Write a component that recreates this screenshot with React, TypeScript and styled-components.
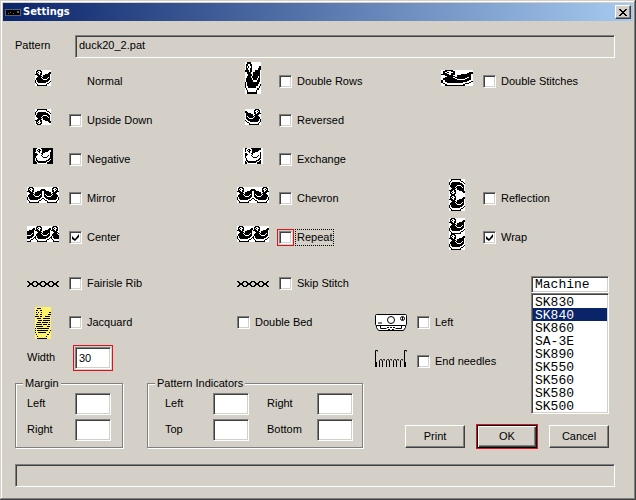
import React, { useState } from "react";
import styled, { createGlobalStyle, css } from "styled-components";

const face = "#d4d0c8";
const shadow = "#808080";
const dark = "#404040";
const marker = "#e0101c";

const GlobalStyle = createGlobalStyle`
  body {
    margin: 0;
    background: ${face};
  }
  * {
    box-sizing: border-box;
  }
  body, button, input {
    font: 11px/13px "Liberation Sans", Arial, sans-serif;
    color: #000;
  }
`;

const sunken = css`
  border: 1px solid;
  border-color: ${shadow} #fff #fff ${shadow};
  box-shadow: inset 1px 1px ${dark}, inset -1px -1px ${face};
`;

const raised = css`
  border: 1px solid;
  border-color: #fff ${dark} ${dark} #fff;
  box-shadow: inset -1px -1px ${shadow};
`;

/* ---------- Pixel art ---------- */

type Bitmap = string[];

const duck: Bitmap = [
  "..####..........",
  ".##..##.........",
  ".#.#..#.......##",
  ".##..##......###",
  "####.##...#####.",
  "..####..#######.",
  "...####.#######.",
  "..####.######.#.",
  ".######.####.##.",
  ".#######....###.",
  "#.############..",
  "#.###########..#",
  "#..########...#.",
  ".#..........##..",
  "..#........#....",
  "..##########....",
];

const stitch: Bitmap = [
  "##....##",
  ".##..##.",
  "..####..",
  "..####..",
  ".##..##.",
  "##....##",
];

const flipX = (b: Bitmap) => b.map((r) => [...r].reverse().join(""));
const flipY = (b: Bitmap) => [...b].reverse();
const beside = (...list: Bitmap[]) =>
  list[0].map((_, i) => list.map((b) => b[i]).join(""));
const doubleRows = (b: Bitmap) => b.flatMap((r) => [r, r]);
const doubleStitches = (b: Bitmap) =>
  b.map((r) => [...r].map((c) => c + c).join(""));
const padX = (b: Bitmap) => b.map((r) => `..${r}..`);
const invert = (b: Bitmap) =>
  b.map((r) => [...r].map((c) => (c === "#" ? "." : "#")).join(""));
const striped = (b: Bitmap) =>
  b.map((r, i) => (i % 2 ? r : ".".repeat(r.length)));
const cut = (b: Bitmap, from: number, to: number) =>
  b.map((r) => r.slice(from, to));

const tracePixels = (b: Bitmap) =>
  b
    .map((row, y) =>
      [...row.matchAll(/#+/g)]
        .map((m) => `M${m.index} ${y}h${m[0].length}v1h-${m[0].length}z`)
        .join("")
    )
    .join("");

function Sprite({ bitmap, paper = "#fff" }: { bitmap: Bitmap; paper?: string }) {
  const w = bitmap[0].length;
  const h = bitmap.length;
  return (
    <svg width={w} height={h} viewBox={`0 0 ${w} ${h}`} shapeRendering="crispEdges" aria-hidden="true">
      <rect width={w} height={h} fill={paper} />
      <path d={tracePixels(bitmap)} />
    </svg>
  );
}

const Carriage = () => (
  <svg width="32" height="17" viewBox="0 0 32 17" fill="none" stroke="#000" aria-hidden="true">
    <path d="M1.5 11.5h29v2l-2 3h-25l-2-3z" fill="#fff" />
    <rect x="0.5" y="0.5" width="31" height="11" rx="1" fill="#fff" />
    <circle cx="16" cy="6" r="3.5" />
    <circle cx="27.5" cy="4.5" r="2" />
    <path d="M27.5 3v3M3 9h4M5.5 12v2.5h6M26.5 12v2.5h-6M12 13.5h2M15 13.5h2M18 13.5h2M13 15.5h2M17 15.5h2" />
  </svg>
);

const Needles = () => (
  <svg width="32" height="25" viewBox="0 0 32 25" fill="none" stroke="#000" aria-hidden="true">
    <path d="M0.5 17V1.5h2v1M29.5 17V1.5h2v1" />
    <path d="M1 13v5M30 13v5" strokeWidth="2" />
    {[4, 7, 11, 14, 18, 21, 25].map((x) => (
      <path key={x} d={`M${x + 0.5} 18V11.5l1-1h1v1`} />
    ))}
  </svg>
);

const art = {
  normal: <Sprite bitmap={duck} />,
  upsideDown: <Sprite bitmap={flipY(duck)} />,
  negative: <Sprite bitmap={invert(padX(duck))} />,
  mirror: <Sprite bitmap={beside(duck, flipX(duck))} />,
  center: <Sprite bitmap={beside(cut(duck, 8, 16), duck, cut(duck, 0, 8))} />,
  doubleRows: <Sprite bitmap={doubleRows(duck)} />,
  reversed: <Sprite bitmap={flipX(duck)} />,
  exchange: <Sprite bitmap={padX(invert(duck))} />,
  repeat: <Sprite bitmap={beside(duck, duck)} />,
  doubleStitches: <Sprite bitmap={doubleStitches(duck)} />,
  reflection: <Sprite bitmap={[...flipY(duck), ...duck]} />,
  wrap: <Sprite bitmap={[...duck, ...duck]} />,
  stitches: <Sprite bitmap={beside(stitch, stitch, stitch, stitch)} paper="none" />,
  jacquard: <Sprite bitmap={striped(doubleRows(duck))} paper="#fff36b" />,
};

/* ---------- Window ---------- */

const Window = styled.main`
  min-height: 100vh;
  padding: 3px 3px 2px;
  background: ${face};
  box-shadow: inset -1px -1px ${dark}, inset 1px 1px ${face},
    inset -2px -2px ${shadow}, inset 2px 2px #fff;
`;

const TitleBar = styled.header`
  display: flex;
  align-items: center;
  gap: 2px;
  height: 18px;
  padding: 0 2px;
  background: linear-gradient(to right, #0a246a, #a6caf0);
`;

const Title = styled.h1`
  flex: 1;
  margin: 0;
  color: #fff;
  font: bold 11px/14px "DejaVu Sans Condensed", "DejaVu Sans", sans-serif;
`;

const CloseButton = styled.button`
  ${raised}
  display: grid;
  place-items: center;
  width: 16px;
  height: 14px;
  padding: 0;
  background: ${face};
`;

const Content = styled.form`
  padding: 14px 18px 11px 12px;
`;

const PatternRow = styled.div`
  display: grid;
  grid-template-columns: 60px 1fr;
`;

const Caption = styled.label`
  padding-top: 4px;
`;

const Field = styled.input`
  ${sunken}
  min-width: 0;
  width: 100%;
  height: 22px;
  padding: 0 3px 1px;
  border-radius: 0;
  outline: none;
  background: #fff;
`;

const PathField = styled(Field)`
  height: 23px;
  padding-bottom: 3px;
  background: ${face};
  box-shadow: inset 1px 1px ${dark};
`;

/* ---------- Options ---------- */

const PatternOptions = styled.div`
  display: grid;
  grid-template-columns: 210fr 204fr 174fr;
  grid-auto-rows: 39px;
  padding-left: 12px;
`;

const OptionLabel = styled.label`
  display: grid;
  grid-template-columns: 32px 1fr;
  column-gap: 10px;
  align-items: center;
  height: 39px;
  white-space: nowrap;

  > svg {
    justify-self: center;
  }
`;

const Choice = styled.span<{ $drop?: boolean }>`
  display: flex;
  align-items: center;
  gap: 5px;
  padding-top: ${(p) => (p.$drop ? "8px" : "0")};
`;

const StaticChoice = styled(Choice)`
  padding-left: 18px;
`;

const BareOption = styled.label`
  display: flex;
  align-items: center;
  gap: 5px;
  height: 39px;
`;

const Tick = styled.input.attrs({ type: "checkbox" })`
  ${sunken}
  appearance: none;
  display: grid;
  place-items: center;
  width: 13px;
  height: 13px;
  margin: 0;
  background: #fff;

  &:checked::before {
    content: "";
    width: 7px;
    height: 7px;
    background: #000;
    clip-path: polygon(0 29%, 43% 71%, 100% 0, 100% 43%, 43% 100%, 0 71%);
  }
`;

const MarkedTick = styled(Tick)`
  box-shadow: inset 1px 1px ${dark}, inset -1px -1px ${face},
    0 0 0 1px ${face}, 0 0 0 2px ${marker};
`;

const OptionText = styled.span<{ $focused?: boolean }>`
  outline: ${(p) => (p.$focused ? "1px dotted #000" : "none")};
  outline-offset: 1px;
`;

interface OptionProps {
  icon: React.ReactNode;
  text: string;
  checked?: boolean;
  drop?: boolean;
  focused?: boolean;
}

function Option({ icon, text, checked = false, drop, focused }: OptionProps) {
  const Box = focused ? MarkedTick : Tick;
  return (
    <OptionLabel>
      {icon}
      <Choice $drop={drop}>
        <Box defaultChecked={checked} />
        <OptionText $focused={focused}>{text}</OptionText>
      </Choice>
    </OptionLabel>
  );
}

/* ---------- Lower half ---------- */

const Lower = styled.div`
  display: grid;
  grid-template-columns: 348px 1fr;
  column-gap: 12px;
  padding: 11px 6px 0 0;
`;

const KnitOptions = styled.div`
  display: grid;
  grid-template-columns: 210px 1fr;
  padding-left: 12px;
`;

const WidthRow = styled.div`
  display: grid;
  grid-template-columns: 48px 36px;
  padding: 5px 0 8px 12px;
`;

const MarkedField = styled(Field)`
  outline: 1px solid ${marker};
  outline-offset: 1px;
`;

const Groups = styled.div`
  display: grid;
  grid-template-columns: 108px 216px;
  gap: 24px;
`;

const Group = styled.fieldset`
  display: grid;
  grid-template-columns: 48px 36px;
  row-gap: 4px;
  min-width: 0;
  margin: 0;
  padding: 4px 8px 6px 11px;
  border: 1px solid ${shadow};
  box-shadow: 1px 1px #fff, inset 1px 1px #fff;
`;

const IndicatorGroup = styled(Group)`
  grid-template-columns: 48px 36px 18px 50px 36px;
  padding-left: 17px;

  > label:nth-of-type(even) {
    grid-column: 4;
  }
`;

const Legend = styled.legend`
  margin-left: -4px;
  padding: 0 2px;
  background: ${face};
  line-height: 12px;

  ${IndicatorGroup} & {
    margin-left: -10px;
  }
`;

const MachineSide = styled.div`
  display: flex;
  flex-direction: column;
  justify-content: space-between;
`;

const MachineRow = styled.div`
  display: flex;
  justify-content: space-between;
`;

const CarriageOptions = styled.div`
  padding-top: 39px;
`;

const MachinePicker = styled.div`
  display: flex;
  flex-direction: column;
  width: 78px;
  padding-top: 12px;
`;

const mono = css`
  font: 13px/13px "Liberation Mono", "Courier New", monospace;
`;

const MachineHeading = styled.label`
  ${sunken}
  ${mono}
  height: 17px;
  padding: 1px 3px;
  background: #fff;
`;

const MachineList = styled.select`
  ${sunken}
  ${mono}
  height: 121px;
  padding: 1px;
  border-radius: 0;
  background: #fff;
  color: #000;
  outline: none;
  overflow: hidden;
  scrollbar-width: none;

  option {
    height: 13px;
    min-height: 13px;
    padding: 0 2px;
    line-height: 13px;
  }
  option:checked {
    background: linear-gradient(#0a246a, #0a246a);
    -webkit-text-fill-color: #fff;
  }
`;

const Buttons = styled.div`
  display: flex;
  justify-content: flex-end;
  gap: 12px;
`;

const PushButton = styled.button`
  ${raised}
  width: 60px;
  height: 23px;
  padding: 0;
  background: ${face};
`;

const DefaultButton = styled(PushButton)`
  border-color: #000;
  box-shadow: inset 1px 1px #fff, inset -1px -1px ${dark},
    inset -2px -2px ${shadow};
  outline: 1px solid ${marker};
`;

const StatusBar = styled.output`
  display: block;
  height: 23px;
  margin-top: 16px;
  border: 1px solid;
  border-color: ${shadow} #fff #fff ${shadow};
  box-shadow: inset 1px 1px ${dark};
`;

const machines = ["SK830", "SK840", "SK860", "SA-3E", "SK890", "SK550", "SK560", "SK580", "SK500"];

function NumberField({ id, label }: { id: string; label: string }) {
  return (
    <>
      <Caption htmlFor={id}>{label}</Caption>
      <Field id={id} />
    </>
  );
}

export default function App() {
  const [machine, setMachine] = useState("SK840");
  return (
    <>
      <GlobalStyle />
      <Window>
        <TitleBar>
          <svg width="16" height="16" viewBox="0 0 16 16" shapeRendering="crispEdges" aria-hidden="true">
            <path fill="#5a6068" d="M0 5h16v7H0z" />
            <path d="M1 6h14v5H1z" />
            <path fill="#68706c" d="M3 9h1v1H3zM5 8h1v1H5zM8 9h1v1H8zM12 7h2v2h-2z" />
          </svg>
          <Title>Settings</Title>
          <CloseButton type="button" aria-label="Close">
            <svg width="8" height="7" viewBox="0 0 8 7" shapeRendering="crispEdges" aria-hidden="true">
              <path d={tracePixels(["##....##", ".##..##.", "..####..", "...##...", "..####..", ".##..##.", "##....##"])} />
            </svg>
          </CloseButton>
        </TitleBar>
        <Content onSubmit={(e) => e.preventDefault()}>
          <PatternRow>
            <Caption htmlFor="pattern">Pattern</Caption>
            <PathField id="pattern" readOnly value="duck20_2.pat" />
          </PatternRow>

          <PatternOptions>
            <OptionLabel as="div">
              {art.normal}
              <StaticChoice $drop>
                <OptionText>Normal</OptionText>
              </StaticChoice>
            </OptionLabel>
            <Option drop icon={art.doubleRows} text="Double Rows" />
            <Option drop icon={art.doubleStitches} text="Double Stitches" />
            <Option drop icon={art.upsideDown} text="Upside Down" />
            <Option drop icon={art.reversed} text="Reversed" />
            <span />
            <Option drop icon={art.negative} text="Negative" />
            <Option drop icon={art.exchange} text="Exchange" />
            <span />
            <Option drop icon={art.mirror} text="Mirror" />
            <Option drop icon={art.mirror} text="Chevron" />
            <Option drop icon={art.reflection} text="Reflection" />
            <Option drop icon={art.center} text="Center" checked />
            <Option drop icon={art.repeat} text="Repeat" focused />
            <Option drop icon={art.wrap} text="Wrap" checked />
          </PatternOptions>

          <Lower>
            <div>
              <KnitOptions>
                <Option icon={art.stitches} text="Fairisle Rib" />
                <Option icon={art.stitches} text="Skip Stitch" />
                <Option icon={art.jacquard} text="Jacquard" />
                <BareOption>
                  <Tick />
                  <OptionText>Double Bed</OptionText>
                </BareOption>
              </KnitOptions>
              <WidthRow>
                <Caption htmlFor="width">Width</Caption>
                <MarkedField id="width" defaultValue="30" />
              </WidthRow>
              <Groups>
                <Group>
                  <Legend>Margin</Legend>
                  <NumberField id="margin-left" label="Left" />
                  <NumberField id="margin-right" label="Right" />
                </Group>
                <IndicatorGroup>
                  <Legend>Pattern Indicators</Legend>
                  <NumberField id="indicator-left" label="Left" />
                  <NumberField id="indicator-right" label="Right" />
                  <NumberField id="indicator-top" label="Top" />
                  <NumberField id="indicator-bottom" label="Bottom" />
                </IndicatorGroup>
              </Groups>
            </div>
            <MachineSide>
              <MachineRow>
                <CarriageOptions>
                  <Option icon={<Carriage />} text="Left" />
                  <Option icon={<Needles />} text="End needles" />
                </CarriageOptions>
                <MachinePicker>
                  <MachineHeading htmlFor="machine">Machine</MachineHeading>
                  <MachineList
                    id="machine"
                    size={9}
                    value={machine}
                    onChange={(e) => setMachine(e.target.value)}
                  >
                    {machines.map((m) => (
                      <option key={m}>{m}</option>
                    ))}
                  </MachineList>
                </MachinePicker>
              </MachineRow>
              <Buttons>
                <PushButton type="button">Print</PushButton>
                <DefaultButton type="submit">OK</DefaultButton>
                <PushButton type="button">Cancel</PushButton>
              </Buttons>
            </MachineSide>
          </Lower>
          <StatusBar />
        </Content>
      </Window>
    </>
  );
}
